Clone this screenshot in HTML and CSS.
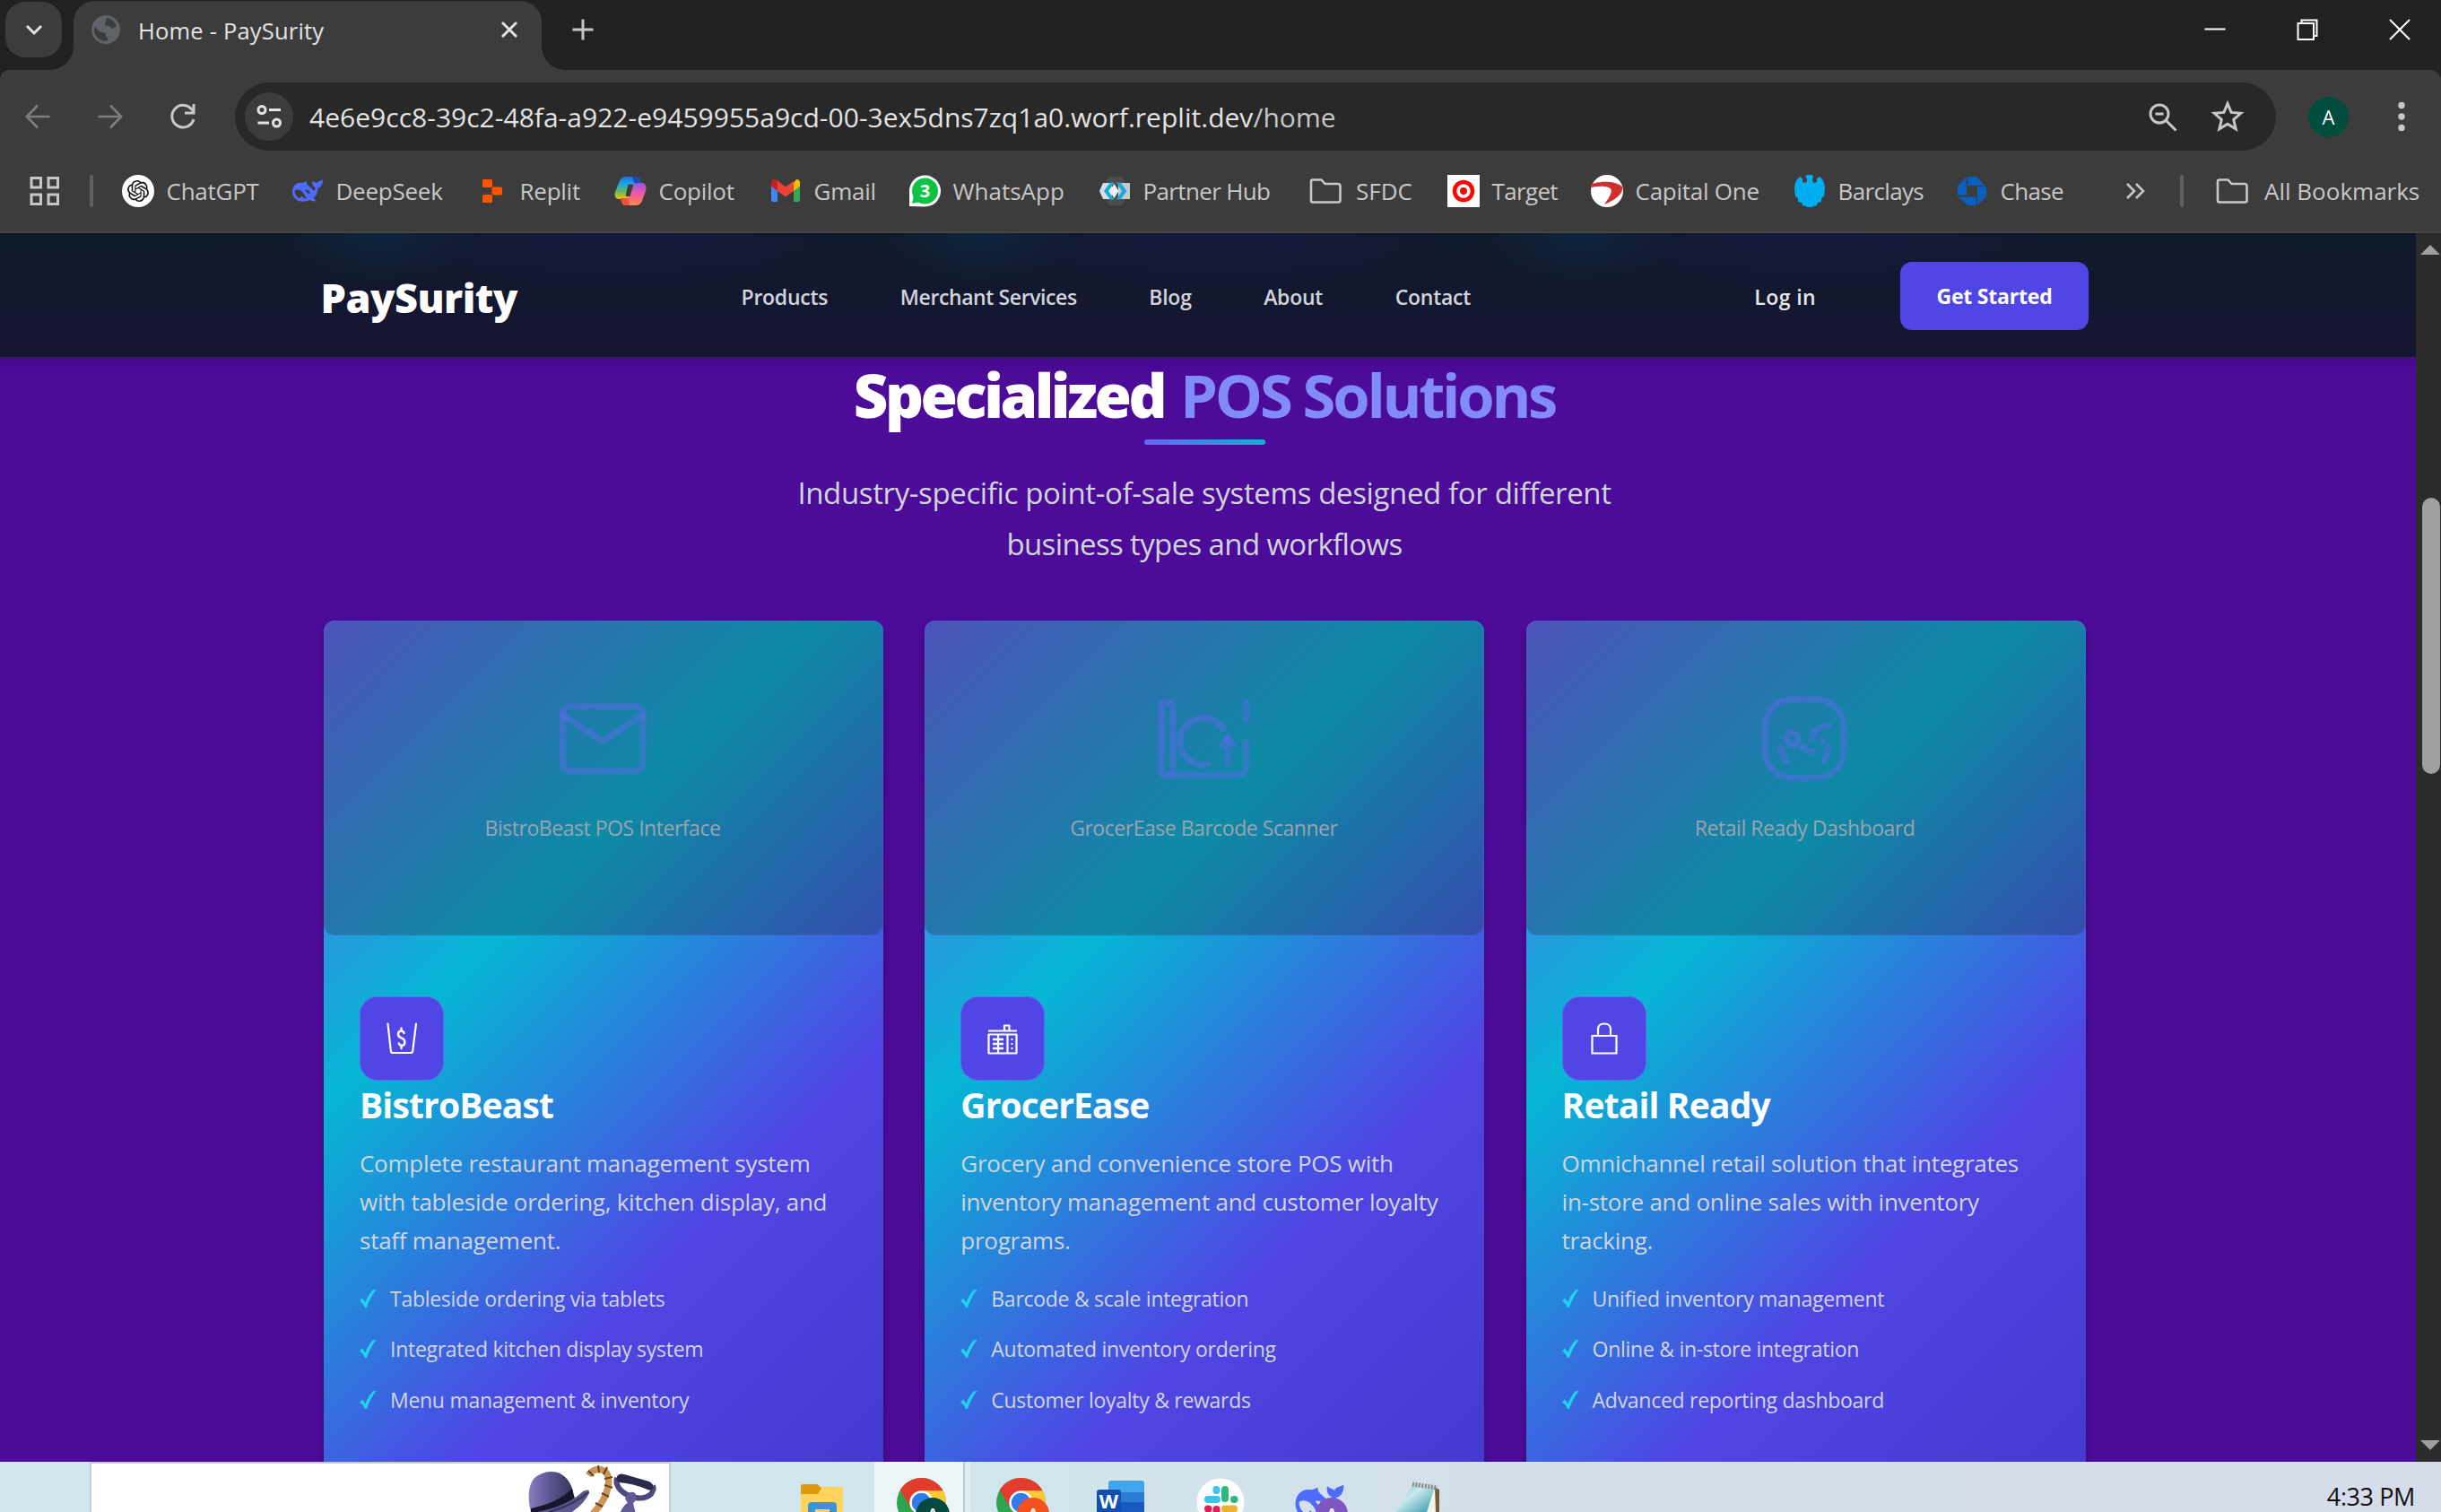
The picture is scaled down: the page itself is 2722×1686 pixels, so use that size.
FILE: index.html
```html
<!DOCTYPE html>
<html lang="en">
<head>
<meta charset="utf-8">
<title>Home - PaySurity</title>
<link rel="stylesheet" href="styles.css">
</head>
<body>
<svg class="defs" width="0" height="0" aria-hidden="true">
  <defs>
    <symbol id="whale" viewBox="0 0 36 36">
      <path fill="#4d6bfe" d="M1 19C1 12 6 8 12 9c3-.5 3-1.500 5-1.500-1 3 2 4 4 6.500 2 1 3 3 4 4 1-1 1.500-2 1.500-4-2.500-1-4-4-3-7.500C25 8 27 8 28.500 9.500 29 7 32 7 35 5.500c.2 5-2 8.500-5.500 9 0 5-2 9-5 11.500 1 .8 2 2 3 3-3 1-5 0-7-1C12 32 1 29 1 19z"/>
      <path fill="var(--cut,#3c3c3c)" d="M3.500 17.500c3-2 7-1 10 3 1.500 2 2 4 3.500 6-3-.5-4-1-5.500-3-1 1-1.500 3-3 2.500C5 24 3.500 21 3.500 17.500zM15 17c3-1 5.500 1 6 4C18.500 21 17 19.500 15 17z"/>
    </symbol>
    <symbol id="folder" viewBox="0 0 38 36">
      <path d="M3 7.500q0-2 2-2h9.500l4 4.500H33q2.500 0 2.500 2.500v16q0 2-2 2H5q-2 0-2-2z" fill="none" stroke="#c7c7c7" stroke-width="2.600" stroke-linejoin="round"/>
    </symbol>
    <symbol id="check" viewBox="0 0 20 22">
      <path d="M0 13.500 3 10.500q2 2 3.200 5Q10 6 15 1.200L18.500 1Q11.500 10 8 21H5.800Q4 16 0 13.500z" fill="#22d3ee"/>
    </symbol>
    <symbol id="chrome" viewBox="0 0 54 54">
      <circle cx="27" cy="27" r="27" fill="#2da44f"/>
      <path d="M27 27 3.600 13.500A27 27 0 0 1 50.400 13.500z" fill="#e33b2e"/>
      <path d="M27 14H50.600A27 27 0 0 1 27 54L39 33z" fill="#fcc934"/>
      <path d="M3.600 13.500 16 34l11-20.500z" fill="#e33b2e"/>
      <circle cx="27" cy="27" r="13" fill="#fff"/>
      <circle cx="27" cy="27" r="10.500" fill="#2f7cf0"/>
    </symbol>
  </defs>
</svg>

<div class="browser">
  <div class="tabstrip">
    <button class="tab-search" aria-label="Search tabs"><svg width="22" height="14" viewBox="0 0 22 14"><path d="M3 3l8 8 8-8" fill="none" stroke="#e3e3e3" stroke-width="3"/></svg></button>
    <div class="tab">
      <svg width="32" height="32" viewBox="0 0 32 32"><circle cx="16" cy="16" r="16" fill="#5f6368"/><path d="M17 3c5 0 9 4 11 9l-5 3c-2-1-2-2-4-3s-3 1-4-1 2-3 1-5zM4 13l6 6c3 0 6 0 6 3s3 2 2 6C11 30 3 25 3 16z" fill="#3c3c3c"/></svg>
      <span class="tab-title">Home - PaySurity</span>
      <svg class="tab-close" width="20" height="20" viewBox="0 0 20 20"><path d="M2 2l16 16M18 2L2 18" stroke="#e3e3e3" stroke-width="3"/></svg>
    </div>
    <svg class="new-tab" width="24" height="24" viewBox="0 0 24 24"><path d="M12 .5v23M.5 12h23" stroke="#c7c7c7" stroke-width="3"/></svg>
    <div class="window-buttons">
      <svg width="24" height="24" viewBox="0 0 24 24"><path d="M.5 11.500h23" stroke="#fff" stroke-width="2"/></svg>
      <svg width="24" height="24" viewBox="0 0 24 24"><path d="M1.500 5h17.500v18H1.500zM5.500 5V1.500H22.500V19H19" fill="none" stroke="#fff" stroke-width="2"/></svg>
      <svg width="24" height="24" viewBox="0 0 24 24"><path d="M1 1l22 22M23 1L1 23" stroke="#fff" stroke-width="2"/></svg>
    </div>
  </div>

  <div class="toolbar">
    <div class="address-row">
      <svg width="28" height="28" viewBox="0 0 28 28"><path d="M27.500 14H2M14 1.500L1.800 14 14 26.500" fill="none" stroke="#7d7d7d" stroke-width="2.700"/></svg>
      <svg class="fwd" width="28" height="28" viewBox="0 0 28 28"><path d="M.5 14H26M14 1.500L26.200 14 14 26.500" fill="none" stroke="#7d7d7d" stroke-width="2.700"/></svg>
      <svg class="reload" width="30" height="30" viewBox="0 0 30 30"><path d="M25.500 8A12.300 12.300 0 1 0 27 18" fill="none" stroke="#c7c7c7" stroke-width="3"/><path d="M28.500 1v11.500H17v-3h7L25.500 8V1z" fill="#c7c7c7"/></svg>
      <div class="omnibox">
        <span class="site-info"><svg width="28" height="28" viewBox="0 0 28 28"><g fill="none" stroke="#e3e3e3" stroke-width="3"><circle cx="6" cy="6.500" r="4"/><path d="M14 6.500h13M1.500 21H14"/><circle cx="22.500" cy="21" r="4"/></g></svg></span>
        <span class="url">4e6e9cc8-39c2-48fa-a922-e9459955a9cd-00-3ex5dns7zq1a0.worf.replit.dev<span class="path">/home</span></span>
        <svg class="zoom" width="32" height="32" viewBox="0 0 32 32"><g fill="none" stroke="#c7c7c7" stroke-width="3"><circle cx="12" cy="12" r="10"/><path d="M7.500 12h9M19 19l11.500 11.500"/></g></svg>
        <svg width="36" height="36" viewBox="0 0 36 36"><path d="M18 3.500l4.100 9.900 10.700.9-8.100 7 2.500 10.500L18 26.200l-9.200 5.600 2.500-10.500-8.100-7 10.700-.9z" fill="none" stroke="#c7c7c7" stroke-width="3"/></svg>
      </div>
      <span class="avatar">A</span>
      <svg class="menu" width="8" height="34" viewBox="0 0 8 34"><g fill="#c7c7c7"><circle cx="4" cy="4.500" r="3.700"/><circle cx="4" cy="17" r="3.700"/><circle cx="4" cy="29.500" r="3.700"/></g></svg>
    </div>

    <div class="bookmarks">
      <svg width="34" height="34" viewBox="0 0 34 34"><g fill="none" stroke="#c7c7c7" stroke-width="3"><path d="M2 2.500h10.500V13H2zM21 2.500h10.500V13H21zM2 21h10.500v10.500H2zM21 21h10.500v10.500H21z"/></g></svg>
      <i class="divider"></i>
      <div class="bookmark-list">
        <a class="bm"><svg width="36" height="36" viewBox="0 0 36 36"><circle cx="18" cy="18" r="18" fill="#fff"/><path transform="translate(6 6)" d="M22.282 9.821a5.985 5.985 0 0 0-.516-4.910 6.046 6.046 0 0 0-6.510-2.900A6.065 6.065 0 0 0 4.981 4.182a5.985 5.985 0 0 0-3.998 2.900 6.046 6.046 0 0 0 .743 7.097 5.980 5.980 0 0 0 .511 4.911 6.051 6.051 0 0 0 6.515 2.900A5.985 5.985 0 0 0 13.260 24a6.056 6.056 0 0 0 5.772-4.206 5.989 5.989 0 0 0 3.998-2.900 6.056 6.056 0 0 0-.748-7.073zm-9.022 12.608a4.476 4.476 0 0 1-2.876-1.041l.142-.08 4.778-2.758a.795.795 0 0 0 .393-.681v-6.737l2.020 1.169a.071.071 0 0 1 .038.052v5.583a4.504 4.504 0 0 1-4.495 4.494zm-9.661-4.125a4.471 4.471 0 0 1-.535-3.014l.142.085 4.783 2.758a.771.771 0 0 0 .781 0l5.843-3.369v2.332a.08.08 0 0 1-.033.062L9.740 19.950a4.499 4.499 0 0 1-6.141-1.646zM2.341 7.896a4.485 4.485 0 0 1 2.366-1.973V11.600a.766.766 0 0 0 .388.677l5.814 3.354-2.020 1.169a.076.076 0 0 1-.071 0l-4.830-2.787A4.504 4.504 0 0 1 2.341 7.872zm16.596 3.856L13.104 8.364 15.119 7.200a.076.076 0 0 1 .071 0l4.830 2.791a4.494 4.494 0 0 1-.677 8.104v-5.677a.79.79 0 0 0-.407-.667zm2.011-3.023l-.142-.085-4.774-2.782a.776.776 0 0 0-.785 0L9.409 9.230V6.897a.066.066 0 0 1 .028-.062l4.830-2.787a4.499 4.499 0 0 1 6.680 4.660zM8.307 12.863l-2.020-1.164a.08.08 0 0 1-.038-.057V6.074a4.499 4.499 0 0 1 7.376-3.454l-.142.081L8.704 5.459a.795.795 0 0 0-.393.681zm1.098-2.365l2.602-1.500 2.607 1.500v2.999l-2.597 1.500-2.607-1.500z" fill="#111"/></svg>ChatGPT</a>
        <a class="bm"><svg width="36" height="36"><use href="#whale"/></svg>DeepSeek</a>
        <a class="bm"><svg width="36" height="36" viewBox="0 0 36 36"><g fill="#fd5402"><rect x="8" y="5" width="11" height="9" rx="1.500"/><rect x="18.500" y="13.500" width="11.500" height="9" rx="1.500"/><rect x="8" y="22" width="11" height="9" rx="1.500"/></g></svg>Replit</a>
        <a class="bm"><svg width="36" height="36" viewBox="0 0 36 36"><defs><linearGradient id="cpA" x1="0" y1="0" x2="0" y2="1"><stop offset="0" stop-color="#1473e0"/><stop offset=".35" stop-color="#1fa9e8"/><stop offset=".65" stop-color="#5cb85a"/><stop offset="1" stop-color="#f5c518"/></linearGradient><linearGradient id="cpB" x1="0" y1="0" x2="0" y2="1"><stop offset="0" stop-color="#a052e8"/><stop offset=".5" stop-color="#ee5aa0"/><stop offset="1" stop-color="#fb8a4a"/></linearGradient></defs><path d="M13 2h12q3 0 4 4l1 4h-4q-4 0-5 4l-3 9q-1 4-5 4H5q-6-1-4-8L6 7q2-5 7-5z" fill="url(#cpA)"/><path d="M20 2h5q3 0 4 4l1 4h-5q-3 0-4-4z" fill="#1b49b8"/><path d="M23 34H13q-3 0-4-4l-1-4h5q4 0 5-4l3-9q1-4 5-4h5q6 1 4 9l-4 11q-2 5-7 5z" fill="url(#cpB)"/><path d="M17 34h-5q-3 0-4-4l-1-4h6q3 0 3.500 3z" fill="#f0503c"/><path d="M15.500 10.500h6L17.500 24h-5z" fill="#3c3c3c"/></svg>Copilot</a>
        <a class="bm"><svg width="36" height="36" viewBox="0 0 36 36"><path d="M2 10v18q0 2 2 2h5V14z" fill="#4285f4"/><path d="M34 10v18q0 2-2 2h-5V14z" fill="#34a853"/><path d="M27 9v9l7-5.500V9q0-4-4-4z" fill="#fbbc04"/><path d="M2 12.500V9q0-4 4-4l3 1.500V18z" fill="#c5221f"/><path d="M9 6.500l9 7 9-7V18l-9 6.500L9 18z" fill="#ea4335"/></svg>Gmail</a>
        <a class="bm"><svg width="36" height="36" viewBox="0 0 36 36"><path d="M1 35V18A17.500 17.500 0 1 1 18 35.500z" fill="#fff"/><circle cx="18.500" cy="18" r="14.500" fill="#0ec244"/><path d="M4 32l2-9 7 7z" fill="#0ec244"/><text x="18.500" y="25" class="wa">3</text></svg>WhatsApp</a>
        <a class="bm"><svg width="36" height="36" viewBox="0 0 36 36"><rect x="9" y="2" width="20" height="32" rx="6" fill="#4c4c4c"/><path d="M1 18l4-9h8l5 9-5 9H5z" fill="#d9dde0"/><path d="M22 9h13v18H22z" fill="#c3cace"/><path d="M13 8.500L6 18l7 9.500h4.500L11 18l6.500-9.500zM20 8.500L26 18l-6 9.500h4.500l7-9.500-7-9.500z" fill="#17a9dc"/><path d="M17.500 10l5 8-5 8-5-8z" fill="#eef2f4"/></svg>Partner Hub</a>
        <a class="bm bm-folder"><svg width="38" height="36"><use href="#folder"/></svg>SFDC</a>
        <a class="bm"><svg width="36" height="36" viewBox="0 0 36 36"><path d="M0 0h36v36H0z" fill="#fff"/><circle cx="18" cy="18" r="10" fill="none" stroke="#f00" stroke-width="4.500"/><circle cx="18" cy="18" r="4" fill="#f00"/></svg>Target</a>
        <a class="bm"><svg width="36" height="36" viewBox="0 0 36 36"><circle cx="18" cy="18" r="18" fill="#fff"/><path d="M0 10.500C12 6 28 7 35 13c2 8-8 15-20 20 5-7 9-13 7.500-17C20 12 9 12 0 14z" fill="#d22e30"/></svg>Capital One</a>
        <a class="bm"><svg width="36" height="36" viewBox="0 0 36 36"><path d="M15 0h6l1 2-1 3v2l2 2 3-1V4l3-2 3 3 2 4 1 6-1 9-3 2v4l-4 1-1 3-4 1-3 3h-2l-3-3-4-1-1-3-4-1v-4l-3-2-1-9 1-6 2-4 3-3 3 2v4l3 1 2-2V4l-2-2z" fill="#00aeef"/></svg>Barclays</a>
        <a class="bm"><svg width="36" height="36" viewBox="0 0 36 36"><g fill="#0b5fc0"><path d="M12 2h11l10 10H12z" /><path d="M34 13v11L24 34V13z"/><path d="M24 34H13L3 24.500h20z"/><path d="M2 23V12L12 2v21z"/></g><path d="M13 13h10v10H13z" fill="#3c3c3c"/><path d="M12.500 2v11M34 12.500H23M23.500 34V23M2 23.500h11" stroke="#3c3c3c" stroke-width="1.500"/></svg>Chase</a>
      </div>
      <svg class="more" width="22" height="18" viewBox="0 0 22 18"><path d="M2 1l8 8-8 8M12 1l8 8-8 8" fill="none" stroke="#c7c7c7" stroke-width="2.600"/></svg>
      <i class="divider divider-end"></i>
      <a class="bm bm-folder bm-all"><svg width="38" height="36"><use href="#folder"/></svg>All Bookmarks</a>
    </div>
  </div>

  <div class="viewport">
    <main class="page">
      <header class="site-header">
        <div class="logo">PaySurity</div>
        <nav class="nav"><a>Products</a><a class="tight">Merchant Services</a><a>Blog</a><a>About</a><a>Contact</a></nav>
        <a class="login">Log in</a>
        <a class="cta">Get Started</a>
      </header>

      <section class="intro">
        <h2><span class="strong">Specialized</span><span class="accent">POS Solutions</span></h2>
        <div class="rule"></div>
        <p>Industry-specific point-of-sale systems designed for different<br><span class="second">business types and workflows</span></p>
      </section>

      <section class="cards">
        <article class="card">
          <div class="visual">
            <svg width="112" height="112" viewBox="0 0 24 24"><rect x="2.400" y="4.250" width="19.300" height="15.400" rx="2"/><path d="M2.400 6.300 12 12.500 21.700 6.300"/></svg>
            <span>BistroBeast POS Interface</span>
          </div>
          <div class="body">
            <div class="tile"><svg width="38" height="38" viewBox="0 0 38 38"><g fill="none" stroke="#fff" stroke-width="2.200" stroke-linecap="round" stroke-linejoin="round"><path d="M3.500 2.500 6.800 33q.3 2 2.200 2h20q1.900 0 2.200-2L35 2.500"/><path d="M21.500 13q-.5-2.500-3.300-2.500-3.200.3-3.200 3.700 0 3 3.700 4.300t3.700 4.500q0 3.700-3.200 3.900-2.500 0-3.500-2.400M18.500 7.500V10M18.500 27v3" stroke-width="2.400"/></g></svg></div>
            <h3>BistroBeast</h3>
            <p>Complete restaurant management system with tableside ordering, kitchen display, and staff management.</p>
            <ul><li><svg><use href="#check"/></svg>Tableside ordering via tablets</li><li><svg><use href="#check"/></svg>Integrated kitchen display system</li><li><svg><use href="#check"/></svg>Menu management &amp; inventory</li></ul>
          </div>
        </article>
        <article class="card">
          <div class="visual">
            <svg width="112" height="112" viewBox="0 0 24 24"><path d="M2.900 3.300h.8q1 0 1 1v15.300q0 1-1 1h-.8q-1 0-1-1V4.300q0-1 1-1z"/><path d="M4.300 20.600h16.200q1.700 0 1.700-1.700v-6.200M22.200 7.600V3.300"/><path d="M16.700 9.600a5.600 5.600 0 1 0-3.600 8.500"/><path d="M17.800 17.800v-6"/><path d="M16.400 13.400l1.400-1.700 1.400 1.700"/></svg>
            <span>GrocerEase Barcode Scanner</span>
          </div>
          <div class="body">
            <div class="tile"><svg width="38" height="38" viewBox="0 0 38 38"><g fill="none" stroke="#fff" stroke-width="2.200" stroke-linejoin="round"><path d="M3 10.500h32M21 10V4.500h5.500V10M3.500 14.500h31v21h-31zM24.500 14v21.500M14 14v21.500"/><path d="M8 20h12M8 25h12M8 30h12" stroke-width="2.400"/><path d="M28.500 20h2M28.500 25h2M28.500 30h2"/></g></svg></div>
            <h3>GrocerEase</h3>
            <p>Grocery and convenience store POS with inventory management and customer loyalty programs.</p>
            <ul><li><svg><use href="#check"/></svg>Barcode &amp; scale integration</li><li><svg><use href="#check"/></svg>Automated inventory ordering</li><li><svg><use href="#check"/></svg>Customer loyalty &amp; rewards</li></ul>
          </div>
        </article>
        <article class="card">
          <div class="visual">
            <svg width="112" height="112" viewBox="0 0 24 24"><rect x="2.400" y="2.500" width="18.800" height="18.800" rx="6.500"/><circle cx="8.900" cy="12" r="1.450"/><path d="M6 13.900l1.400 3.400M17.600 13.900l-1 3.400M11.400 14q1 .9 2.500 1M13.600 11.900q1-3 4.100-3.100M16.100 12.200v.3"/></svg>
            <span>Retail Ready Dashboard</span>
          </div>
          <div class="body">
            <div class="tile"><svg width="38" height="38" viewBox="0 0 38 38"><g fill="none" stroke="#fff" stroke-width="2.200"><path d="M5.500 16h27v19.500h-27zM12 16V9q0-6.500 7-6.500T26 9v7"/></g></svg></div>
            <h3>Retail Ready</h3>
            <p>Omnichannel retail solution that integrates in-store and online sales with inventory tracking.</p>
            <ul><li><svg><use href="#check"/></svg>Unified inventory management</li><li><svg><use href="#check"/></svg>Online &amp; in-store integration</li><li><svg><use href="#check"/></svg>Advanced reporting dashboard</li></ul>
          </div>
        </article>
      </section>
    </main>
    <div class="scrollbar"><i class="up"></i><i class="thumb"></i><i class="down"></i></div>
  </div>
</div>

<div class="taskbar">
  <div class="search">
    <svg width="150" height="54" viewBox="0 0 150 54">
      <defs><linearGradient id="hat" x1="0" x2="1"><stop offset="0" stop-color="#8a7cc0"/><stop offset=".5" stop-color="#5a5590"/><stop offset="1" stop-color="#35345c"/></linearGradient></defs>
      <path d="M6 54Q0 30 9 17 20 7 34 9.500 48 13 53 31L24 54z" fill="url(#hat)"/>
      <path d="M6 50Q36 44 52 28l3 11Q38 54 24 54H6z" fill="#17162e"/>
      <path d="M12 54Q46 48 64 31q8-4 7 2Q66 44 52 54z" fill="#5c578f"/><path d="M26 54Q54 46 70 32" fill="none" stroke="#33325a" stroke-width="2"/>
      <path d="M70 13q6-8 15-6 10 3 7 19Q90 40 75 56" fill="none" stroke="#c99655" stroke-width="7.500"/>
      <path d="M81 2l1 8M91 4l-4 8M97 15l-9 2M97 27l-9-3M93 37l-8-4M86 48l-8-4M70 8l6 6" stroke="#6b4524" stroke-width="2.200"/>
      <path d="M102 16q-2 5 2 11t14 10q14 4 22-3 4-6 2-9" fill="none" stroke="#4b487c" stroke-width="6"/>
      <path d="M101 18q1-8 9-6l28 8q6 3 4 8-2 3-6 1-16-7-32-8z" fill="#2b2a4c"/>
      <path d="M114 33q6-3 9 1l1 6-4 4 3 12h-18q4-10 9-12l-3-5z" fill="#615c98"/>
    </svg>
  </div>
  <div class="apps">
    <div class="app"><svg width="56" height="56" viewBox="0 0 56 56"><path d="M4 28h47v28H4z" fill="#ffd35c"/><path d="M4 27q0-2 2-2h17l4 5-4 6H4z" fill="#dc9c09"/><path d="M12 56V49q0-4 4-4h24q4 0 4 4v7z" fill="#3a93dd"/><path d="M20 53h16v3H20z" fill="#ffd35c"/></svg></div>
    <div class="app active"><svg width="64" height="56" viewBox="0 0 64 56"><use href="#chrome" x="4" y="18" width="55" height="55"/><circle cx="44" cy="59" r="19" fill="#04493f"/><text x="44" y="66" class="badge">A</text></svg></div>
    <div class="app"><svg width="64" height="56" viewBox="0 0 64 56"><use href="#chrome" x="4" y="18" width="55" height="55"/><circle cx="45" cy="58" r="18" fill="#f4511e"/><text x="45" y="66" class="badge">A</text></svg></div>
    <div class="app"><svg width="56" height="56" viewBox="0 0 56 56"><path d="M14 24q0-3 3-3h34q3 0 3 3v11H14z" fill="#41a5ee"/><path d="M14 34h40v11H14z" fill="#2b7cd3"/><path d="M14 45h40v11H14z" fill="#185abd"/><rect x="1" y="31" width="27" height="27" rx="3" fill="#124fb0"/><text x="14.500" y="52" class="word">W</text></svg></div>
    <div class="app"><svg width="56" height="56" viewBox="0 0 56 56"><circle cx="28" cy="45" r="26.500" fill="#fdfdfd"/><g fill="none" stroke-width="8" stroke-linecap="round"><path d="M14 42h10M23.500 31v1" stroke="#36c5f0"/><path d="M33 31v10M43 42h.5" stroke="#2eb67d"/><path d="M33 52.500h10M33 62v-1" stroke="#ecb22e"/><path d="M14 52.500h.5M23.500 53v10" stroke="#e01e5a"/></g></svg></div>
    <div class="app whale"><svg width="64" height="60" viewBox="0 0 64 60"><use href="#whale" x="3" y="17" width="57" height="57"/><circle cx="45" cy="58" r="18" fill="#7e57c2"/><text x="45" y="66" class="badge">A</text></svg></div>
    <div class="app"><svg width="56" height="56" viewBox="0 0 56 56"><defs><linearGradient id="pad" x1="0" y1="0" x2="1" y2="1"><stop offset="0" stop-color="#6fc0cc"/><stop offset=".4" stop-color="#c9e9ec"/><stop offset="1" stop-color="#2f97ab"/></linearGradient></defs><path d="M46 29l4 2v25H38z" fill="#7a5c34"/><path d="M45 29l1 27H36z" fill="#f3f3ef"/><path d="M21 25l24 3-9 28H2z" fill="url(#pad)"/><path d="M20 25l28 4" stroke="#8b8b86" stroke-width="5" stroke-dasharray="2 1.500"/></svg></div>
  </div>
  <span class="clock">4:33 PM</span>
</div>
</body>
</html>
```

FILE: styles.css
```css
* { box-sizing: border-box; }
body {
  margin: 0;
  width: 2722px;
  height: 1686px;
  overflow: hidden;
  font-family: "Open Sans", "Noto Sans", sans-serif;
  background: #202221;
}
.defs { position: absolute; }
svg { display: block; flex: none; }
h2, h3, p, ul { margin: 0; padding: 0; }
a { color: inherit; text-decoration: none; white-space: nowrap; }

/* tab strip */
.tabstrip { display: flex; align-items: flex-start; height: 78px; background: #202221; }
.tab-search {
  display: flex; align-items: center; justify-content: center;
  width: 63px; height: 62px; margin: 2px 0 0 6px; padding: 0;
  border: 0; border-radius: 22px; background: #3c3c3c;
}
.tab {
  position: relative;
  display: flex; align-items: center;
  width: 522px; height: 77px; margin: 1px 0 0 13px; padding: 0 26px 13px 20px;
  border-radius: 24px 24px 0 0; background: #3c3c3c;
}
.tab::before, .tab::after {
  content: ""; position: absolute; bottom: 0; width: 26px; height: 26px;
}
.tab::before { left: -26px; background: radial-gradient(circle at 0 0, transparent 25.500px, #3c3c3c 26px); }
.tab::after { right: -26px; background: radial-gradient(circle at 100% 0, transparent 25.500px, #3c3c3c 26px); }
.tab-title { margin: 2px 0 0 20px; font-size: 25.500px; line-height: 36px; letter-spacing: .2px; color: #e3e3e3; }
.tab-close { margin-left: auto; }
.new-tab { margin: 21px 0 0 34px; }
.window-buttons { display: flex; gap: 79px; margin: 21px 34px 0 auto; }

/* toolbar */
.toolbar {
  height: 182px; padding-top: 14px;
  border-bottom: 2px solid #474747; border-radius: 10px 12px 0 0; background: #3c3c3c;
}
.address-row { display: flex; align-items: center; height: 76px; padding: 0 40px 0 28px; }
.fwd { margin-left: 53px; }
.reload { margin-left: 52px; }
.omnibox {
  display: flex; align-items: center;
  width: 2277px; height: 76px; margin-left: 43px; padding: 0 36px 0 11px;
  border-radius: 38px; background: #282828;
}
.site-info { display: flex; align-items: center; justify-content: center; width: 54px; height: 54px; border-radius: 50%; background: #3c3c3c; }
.url { margin: 1px 0 0 18px; font-size: 30px; line-height: 40px; letter-spacing: .02px; color: #e3e3e3; white-space: nowrap; }
.path { color: #c7c7c7; }
.zoom { margin: 2px 38px 0 auto; }
.avatar { width: 45px; height: 45px; margin-left: 36px; border-radius: 50%; background: #004d40; color: #fff; font-size: 22px; line-height: 45px; text-align: center; }
.menu { margin-left: 55px; }

.bookmarks { display: flex; align-items: center; height: 90px; padding-left: 33px; font-size: 26px; line-height: 34px; color: #c7c7c7; }
.divider { width: 4px; height: 36px; margin-left: 33px; border-radius: 2px; background: #5f5f5f; }
.bookmark-list {
  display: grid; margin-left: 32px;
  grid-template-columns: 189px 205px 155px 173px 155px 212px 234px 155px 160px 226px 181px 190px;
}
.bm { display: flex; align-items: center; gap: 13.500px; height: 36px; padding-bottom: 1px; letter-spacing: -.25px; }
.bm:nth-child(6) { letter-spacing: 0; }
.bm:nth-child(7), .bm:nth-child(9), .bm:nth-child(11), .bm:nth-child(12) { letter-spacing: -.65px; }
.bm-folder { gap: 15px; letter-spacing: 0; }
.more { margin-left: -1px; }
.divider-end { margin-left: 39px; }
.bm-all { margin-left: 35px; letter-spacing: -.2px; gap: 17px; }
.wa { font: 700 20px "Open Sans", sans-serif; fill: #fff; text-anchor: middle; }

/* page */
.viewport { display: flex; height: 1370px; }
.page { width: 2694px; height: 1370px; overflow: hidden; background: #4c0b99; }
.site-header {
  display: flex; align-items: center;
  height: 139px; padding: 1px 365px 0 357.500px;
  border-bottom: 1px solid #2a2a44;
  background:
    radial-gradient(ellipse 110px 60px at 420px 0, rgba(12, 56, 92, .38), transparent),
    radial-gradient(ellipse 310px 75px at 690px 0, rgba(26, 26, 78, .5), transparent),
    radial-gradient(ellipse 110px 60px at 1090px 0, rgba(12, 56, 92, .38), transparent),
    radial-gradient(ellipse 310px 75px at 1360px 0, rgba(26, 26, 78, .5), transparent),
    radial-gradient(ellipse 110px 60px at 1760px 0, rgba(12, 56, 92, .38), transparent),
    radial-gradient(ellipse 310px 75px at 2030px 0, rgba(26, 26, 78, .5), transparent),
    linear-gradient(180deg, #101a2a 0%, #11182c 35%, #151632 75%);
  color: #d1d5db;
}
.logo { width: 220px; margin-top: 4px; font-size: 45px; line-height: 60px; font-weight: 800; letter-spacing: -.5px; color: #fff; }
.nav { display: flex; gap: 80.500px; margin: 2px 0 0 249px; font-size: 23px; line-height: 34px; font-weight: 600; letter-spacing: -.25px; }
.nav .tight { letter-spacing: -.4px; }
.login { margin: 2px 94px 0 auto; font-size: 23px; line-height: 34px; font-weight: 600; letter-spacing: .4px; color: #e5e7eb; }
.cta { width: 210px; height: 76px; border-radius: 13px; background: #4f46e5; color: #fff; font-size: 23px; line-height: 77px; font-weight: 700; letter-spacing: -.2px; text-align: center; }

.intro { display: flex; flex-direction: column; align-items: center; height: 293px; padding-right: 8px; background: linear-gradient(180deg, #480890 0, #4c0b99 20px); }
.intro h2 { display: flex; gap: 18px; margin-top: 1px; font-size: 67px; line-height: 81px; }
.strong { font-weight: 800; letter-spacing: -3.500px; color: #fff; }
.accent { font-weight: 700; letter-spacing: -3.300px; color: #818cf8; }
.rule { width: 135px; height: 6px; margin-top: 9px; border-radius: 3px; background: linear-gradient(90deg, #6366f1, #06b6d4); }
.intro p { margin-top: 25px; font-size: 33px; line-height: 57px; letter-spacing: -.37px; text-align: center; color: #d1d5db; }
.second { letter-spacing: -.63px; }

.cards { display: grid; grid-template-columns: repeat(3, 624px); column-gap: 46.300px; padding-left: 361px; }
.card {
  height: 1013px; border-radius: 12px;
  background: linear-gradient(135deg, #6366f1 0%, #06b6d4 33.300%, #4f46e5 66.700%, #4338ca 100%);
  box-shadow: 0 6px 10px rgba(0, 0, 0, .25);
}
.visual {
  display: flex; flex-direction: column; align-items: center;
  height: 351px; padding: 76px 2px 0 0;
  border-radius: 13px; background: rgba(31, 41, 55, .3);
  box-shadow: inset 0 0 0 1px rgba(99, 102, 241, .25);
}
.visual svg { fill: none; stroke: rgba(99, 102, 241, .42); stroke-width: 1.500; stroke-linecap: round; }
.visual span { margin-top: 26px; font-size: 23px; line-height: 34px; letter-spacing: -.47px; color: #9ca3af; }
.body { padding: 67.500px 40px 0 40px; }
.tile { display: flex; align-items: center; justify-content: center; width: 94px; height: 94px; border: 1px solid #6366f1; border-radius: 20px; background: #4f46e5; }
.body h3 { margin-top: 3px; font-size: 39px; line-height: 48px; letter-spacing: -.85px; color: #fff; }
.body p { margin-top: 20px; font-size: 26px; line-height: 43.100px; letter-spacing: -.26px; color: #d1d5db; }
.body ul { display: grid; row-gap: 20.200px; margin-top: 25.500px; list-style: none; font-size: 23px; line-height: 36px; letter-spacing: -.28px; color: #d1d5db; }
.body li { display: flex; align-items: center; gap: 14px; }
.body li svg { width: 20px; height: 22px; }

.scrollbar { display: flex; flex-direction: column; align-items: flex-end; width: 28px; padding: 13px 1px 13px 0; background: #2b2b2b; }
.up, .down { border: 11px solid transparent; border-top: 0; border-bottom: 11px solid #9f9f9f; }
.down { margin-top: auto; border-bottom: 0; border-top: 11px solid #9f9f9f; }
.thumb { width: 20px; height: 308px; margin-top: 271px; border-radius: 10px; background: #9f9f9f; }

/* taskbar */
.taskbar { display: flex; height: 56px; padding: 0 29px 0 100px; background: linear-gradient(90deg, #cfe6ee 0%, #d0e6ec 38%, #d2e0ea 60%, #d6dcea 100%); }
.search { width: 648px; padding-left: 484px; border: 2px solid #c8c8c8; border-bottom: 0; background: #fff; overflow: hidden; }
.apps { display: flex; margin-left: 113.500px; }
.app { display: flex; justify-content: center; width: 111px; height: 56px; overflow: hidden; }
.active { background: linear-gradient(90deg, transparent 2px, #ecf4f8 2px 101px, #b4cdd4 101px 103px, #dfeef2 103px 109px, transparent 109px); }
.whale { --cut: #d3e2ea; }
.badge { font: 600 20px "Open Sans", sans-serif; fill: #fff; text-anchor: middle; }
.word { font: 700 22px "Open Sans", sans-serif; fill: #fff; text-anchor: middle; }
.clock { margin: 22px 0 0 auto; font-size: 27px; line-height: 34px; letter-spacing: -.4px; color: #111; }
```
